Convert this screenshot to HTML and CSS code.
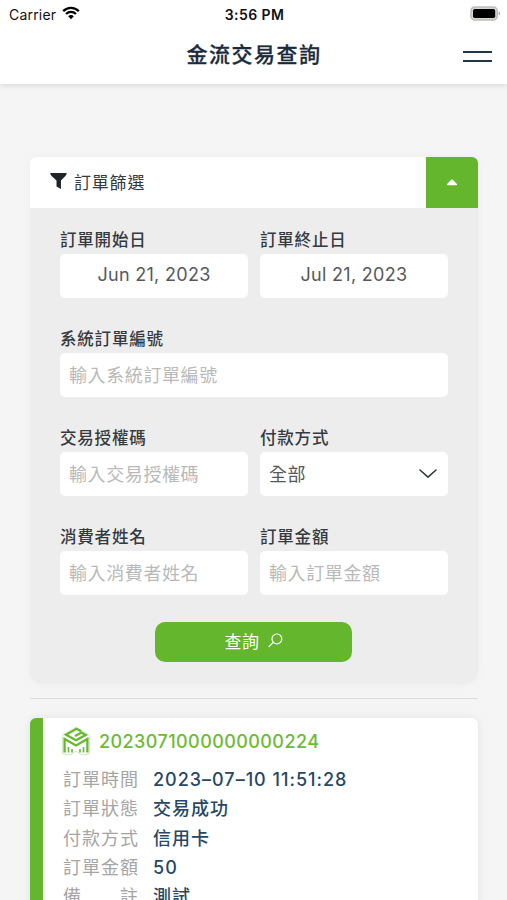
FILE: index.html
```html
<!DOCTYPE html>
<html lang="zh-Hant">
<head>
    <meta charset="UTF-8">
    <meta name="viewport" content="width=device-width, initial-scale=1.0">
    <title>金流交易查詢</title>
    <link rel="stylesheet" href="styles.css">
</head>
<body>
    <header class="header">
        <div class="status-bar">
            <div class="carrier">
                <span>Carrier</span>
                <svg class="wifi" viewBox="0 0 18 14">
                    <path d="M1.2 5.1C5.7.7 12.3.7 16.8 5.1" fill="none" stroke="#000" stroke-width="2.3"/>
                    <path d="M4 8c2.9-2.8 7.1-2.8 10 0" fill="none" stroke="#000" stroke-width="2.2"/>
                    <path d="M6.2 10.2c1.6-1.5 4-1.5 5.6 0L9 13.2z"/>
                </svg>
            </div>
            <div class="time">3:56 PM</div>
            <svg class="battery" viewBox="0 0 31 15">
                <rect x="1" y="1" width="26.200" height="13" rx="3.800" fill="#d6d6d2" stroke="#bdbdb9" stroke-width="1.500"/>
                <rect x="3" y="3" width="22.2" height="9" rx="1.8"/>
                <path d="M28.6 5.2c2 .8 2 3.6 0 4.4z" fill="#aaa"/>
            </svg>
        </div>
        <div class="nav">
            <h1>金流交易查詢</h1>
            <button class="menu-btn" aria-label="選單"><span></span><span></span></button>
        </div>
    </header>

    <main class="container">
        <section class="filter">
            <div class="filter-head">
                <div class="filter-title">
                    <svg class="funnel" viewBox="0 0 18 18">
                        <path d="M.5.5h17c.4 1.2-.3 2.2-1.2 3.1L11.600 8.500v9.100L6.900 14.700V8.500L1.700 3.600C.8 2.700.1 1.700.5.5z"/>
                    </svg>
                    <span>訂單篩選</span>
                </div>
                <button class="toggle-btn" aria-label="收合">
                    <svg viewBox="0 0 12 7"><path d="M5.100.8q.9-.8 1.800 0l4 4.200q.8 1.300-.8 1.300H1.900Q.3 6.300 1.100 5z"/></svg>
                </button>
            </div>
            <form class="filter-body">
                <div class="field">
                    <label>訂單開始日</label>
                    <div class="control date">Jun 21, 2023</div>
                </div>
                <div class="field">
                    <label>訂單終止日</label>
                    <div class="control date">Jul 21, 2023</div>
                </div>
                <div class="field full">
                    <label for="orderNo">系統訂單編號</label>
                    <input class="control" type="text" id="orderNo" placeholder="輸入系統訂單編號">
                </div>
                <div class="field">
                    <label for="authCode">交易授權碼</label>
                    <input class="control" type="text" id="authCode" placeholder="輸入交易授權碼">
                </div>
                <div class="field">
                    <label>付款方式</label>
                    <div class="control select">
                        <span>全部</span>
                        <svg viewBox="0 0 18 10"><path d="M1 1l8 7.200L17 1" fill="none" stroke="#343a40" stroke-width="1.600" stroke-linecap="round" stroke-linejoin="round"/></svg>
                    </div>
                </div>
                <div class="field">
                    <label for="customer">消費者姓名</label>
                    <input class="control" type="text" id="customer" placeholder="輸入消費者姓名">
                </div>
                <div class="field">
                    <label for="amount">訂單金額</label>
                    <input class="control" type="text" id="amount" placeholder="輸入訂單金額">
                </div>
                <button class="search-btn" type="button">
                    <span>查詢</span>
                    <svg viewBox="0 0 15 15" fill="none" stroke="#fff" stroke-width="1.200" stroke-linecap="round"><circle cx="8.900" cy="5.900" r="4.900"/><path d="M5.300 9.400L1 13.700"/></svg>
                </button>
            </form>
        </section>

        <hr class="divider">

        <section class="order">
            <div class="order-head">
                <svg class="logo" viewBox="5 5 30 30">
                    <path class="halo" d="M20 9L31 15.500V31h-5l-6-4-6 4H9V15.500z"/>
                    <path class="halo-inner" d="M20 9L31 15.500V31h-5l-6-4-6 4H9V15.500z"/>
                    <g class="mark">
                        <path d="M25 10.200L20.500 7.800 10 13.700l10 5.500 9.800-5.300-4.300-2.400-6.500 3.500"/>
                        <path d="M8.600 31.500V18L20 24.500 31.400 18v13.500"/>
                        <path class="thin" d="M12.500 31.500V26M16 31.500V28M24 31.500V28M27.500 31.500V26"/>
                    </g>
                </svg>
                <span>2023071000000000224</span>
            </div>
            <dl class="order-info">
                <dt>訂單時間</dt><dd>2023–07–10 11:51:28</dd>
                <dt>訂單狀態</dt><dd>交易成功</dd>
                <dt>付款方式</dt><dd>信用卡</dd>
                <dt>訂單金額</dt><dd>50</dd>
                <dt class="spread"><span>備</span><span>註</span></dt><dd>測試</dd>
            </dl>
        </section>
    </main>
</body>
</html>
```
FILE: styles.css
```css
*{
    margin: 0px;
    padding: 0px;
    box-sizing: border-box;
}

body{
    height: 900px;
    overflow: hidden;
    background: #f5f5f5;
    font-family: Inter, "Noto Sans CJK TC", sans-serif;
    color: #343a40;
}

svg{
    display: block;
    flex: none;
}

button{
    border: none;
    font-family: inherit;
    cursor: pointer;
}

.header{
    height: 84px;
    background: #fff;
    box-shadow: 0 2px 5px rgba(0,0,0,.1);
}

.status-bar{
    display: grid;
    grid-template-columns: 1fr auto 1fr;
    align-items: center;
    height: 28px;
    padding: 0 7px 0 9px;
    font-size: 14px;
    color: #111;
}

.carrier{
    display: flex;
    align-items: center;
    gap: 6px;
    letter-spacing: .2px;
}

.wifi{
    width: 18px;
    height: 14px;
    margin-top: -3px;
}

.time{
    font-weight: 600;
    letter-spacing: .4px;
}

.battery{
    width: 31px;
    height: 15px;
    margin: -2px -1px 0 0;
    justify-self: end;
}

.nav{
    display: grid;
    grid-template-columns: 1fr auto 1fr;
    align-items: center;
    height: 56px;
    padding: 0 15px;
}

.nav h1{
    grid-column: 2;
    font-size: 21px;
    font-weight: 500;
    line-height: 30px;
    letter-spacing: 1.5px;
    margin: -2px 0 0 1px;
    color: #1b2b3b;
    -webkit-text-stroke: .3px #1b2b3b;
}

.menu-btn{
    justify-self: end;
    display: flex;
    flex-direction: column;
    gap: 7px;
    background: transparent;
}

.menu-btn span{
    width: 29px;
    height: 2px;
    background: #22364a;
}

.container{
    padding: 73px 29px 0 30px;
}

.filter{
    height: 527px;
    background: #ededed;
    border-radius: 6px 6px 14px 14px;
    box-shadow: 0 0 10px rgba(0,0,0,.04);
}

.filter-head{
    display: flex;
    height: 51px;
    background: #fff;
    border-radius: 6px 6px 0 0;
    overflow: hidden;
}

.filter-title{
    flex: 1;
    display: flex;
    align-items: center;
    gap: 7px;
    padding: 0 0 3px 20px;
    font-size: 17px;
    letter-spacing: .8px;
}

.funnel{
    width: 17px;
    height: 18px;
    fill: #212529;
}

.toggle-btn{
    display: flex;
    align-items: center;
    justify-content: center;
    width: 52px;
    background: #64b62c;
}

.toggle-btn svg{
    width: 12px;
    height: 7px;
    fill: #fff;
}

.filter-body{
    display: grid;
    grid-template-columns: 188px 188px;
    gap: 31px 12px;
    padding: 22px 30px 0;
}

.full,
.search-btn{
    grid-column: 1 / 3;
}

.field label{
    display: block;
    height: 24px;
    line-height: 20px;
    font-size: 16.5px;
    font-weight: 500;
    letter-spacing: .8px;
}

.control{
    display: flex;
    align-items: center;
    width: 100%;
    height: 44px;
    padding: 0 9px;
    border: none;
    outline: none;
    border-radius: 5px;
    background: #fff;
    font-family: inherit;
    font-size: 18px;
    letter-spacing: .6px;
    color: #55595e;
}

.control::placeholder{
    color: #b9b9b9;
}

.date{
    justify-content: center;
    padding-bottom: 4px;
    letter-spacing: .3px;
}

.select{
    justify-content: space-between;
    padding-bottom: 2px;
}

.select svg{
    width: 18px;
    height: 10px;
    margin: 2px 2px 0 0;
}

.search-btn{
    display: flex;
    align-items: center;
    justify-content: center;
    justify-self: center;
    gap: 8px;
    width: 197px;
    height: 40px;
    margin: -4px 0 0 -1px;
    padding-bottom: 3px;
    border-radius: 10px;
    background: #64b62c;
    color: #fff;
    font-size: 17px;
    letter-spacing: .6px;
}

.search-btn svg{
    width: 15px;
    height: 15px;
}

.divider{
    margin-top: 14px;
    border: none;
    border-top: 1px solid #dcdcdc;
}

.order{
    height: 240px;
    margin-top: 19px;
    padding: 8px 0 0 19px;
    border-left: 13px solid #64b62c;
    border-radius: 6px;
    background: #fff;
    box-shadow: 0 0 10px rgba(0,0,0,.08);
}

.order-head{
    display: flex;
    align-items: center;
    gap: 8px;
    height: 30px;
    margin-left: -1px;
    font-size: 18px;
    font-weight: 500;
    letter-spacing: .42px;
    color: #6cbb35;
}

.logo{
    width: 30px;
    height: 30px;
}

.halo,
.halo-inner{
    fill: #fff;
    stroke: #d3ebc2;
    stroke-width: 6px;
    stroke-linejoin: round;
}

.halo-inner{
    stroke: #fff;
    stroke-width: 4px;
}

.mark{
    fill: none;
    stroke: #66b82e;
    stroke-width: 2.3px;
}

.thin{
    stroke-width: 1.6px;
}

.order-info{
    display: grid;
    grid-template-columns: 77px 1fr;
    column-gap: 14px;
    grid-auto-rows: 29.3px;
    margin-top: 9px;
    line-height: 29px;
    font-size: 18px;
    letter-spacing: 1px;
    white-space: nowrap;
}

.order-info dt{
    padding-left: 1px;
    color: #a5a5a5;
}

.order-info dd{
    font-weight: 500;
    color: #264866;
}

.spread{
    display: flex;
    justify-content: space-between;
}
```
